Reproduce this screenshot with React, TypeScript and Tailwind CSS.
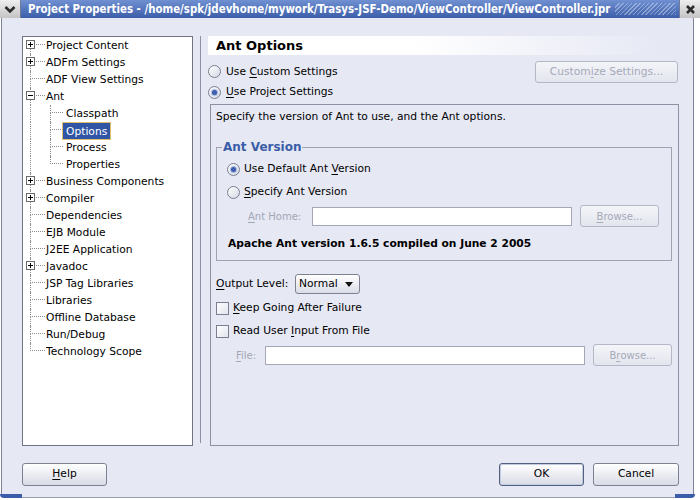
import React from "react";

type Node = {
  label: string;
  exp?: "+" | "-";
  child?: boolean;
  selected?: boolean;
  lastChild?: boolean;
};

const tree: Node[] = [
  { label: "Project Content", exp: "+" },
  { label: "ADFm Settings", exp: "+" },
  { label: "ADF View Settings" },
  { label: "Ant", exp: "-" },
  { label: "Classpath", child: true },
  { label: "Options", child: true, selected: true },
  { label: "Process", child: true },
  { label: "Properties", child: true, lastChild: true },
  { label: "Business Components", exp: "+" },
  { label: "Compiler", exp: "+" },
  { label: "Dependencies" },
  { label: "EJB Module" },
  { label: "J2EE Application" },
  { label: "Javadoc", exp: "+" },
  { label: "JSP Tag Libraries" },
  { label: "Libraries" },
  { label: "Offline Database" },
  { label: "Run/Debug" },
  { label: "Technology Scope" },
];

// mnemonic: underline one letter, as Swing does
function Mn({ text, at }: { text: string; at: number }) {
  return (
    <>
      {text.slice(0, at)}
      <span className="underline underline-offset-[2px]">{text[at]}</span>
      {text.slice(at + 1)}
    </>
  );
}

function Radio({ checked }: { checked?: boolean }) {
  return (
    <span className="flex h-[13px] w-[13px] shrink-0 items-center justify-center rounded-full border border-[#7a7f91] bg-[linear-gradient(135deg,#ffffff,#d5d8e3)]">
      {checked ? (
        <span className="h-[5px] w-[5px] rounded-full bg-[#3d5fae] shadow-[0_0_0_1px_#a9bbe0]" />
      ) : null}
    </span>
  );
}

function Check() {
  return (
    <span className="h-[13px] w-[13px] shrink-0 border border-[#7a7f91] bg-[linear-gradient(135deg,#ffffff,#e3e5ee)]" />
  );
}

function Button({
  children,
  disabled,
  primary,
  className = "",
}: {
  children: React.ReactNode;
  disabled?: boolean;
  primary?: boolean;
  className?: string;
}) {
  const tone = disabled
    ? "border-[#b3b7c6] text-[#a6a9b8] bg-[linear-gradient(#f4f5f9,#e3e5ee)]"
    : primary
      ? "border-[#52607f] text-black bg-[linear-gradient(#ffffff,#d8dbe6)] shadow-[inset_0_0_0_1px_#c3cbe0]"
      : "border-[#7d8293] text-black bg-[linear-gradient(#ffffff,#d8dbe6)]";
  return (
    <div
      className={`flex shrink-0 items-center justify-center rounded-[3px] border ${tone} ${className}`}
    >
      {children}
    </div>
  );
}

function Expander({ sign }: { sign: "+" | "-" }) {
  return (
    <svg
      width="9"
      height="9"
      viewBox="0 0 9 9"
      className="absolute left-[-4px] top-[3px]"
    >
      <rect x="0.5" y="0.5" width="8" height="8" fill="#fff" stroke="#6a6a6a" />
      <line x1="2" y1="4.5" x2="7" y2="4.5" stroke="#000" />
      {sign === "+" ? <line x1="4.5" y1="2" x2="4.5" y2="7" stroke="#000" /> : null}
    </svg>
  );
}

function TreeRow({ node, first, last }: { node: Node; first: boolean; last: boolean }) {
  const dot = "border-dotted border-[#8c8c8c]";
  if (node.child) {
    return (
      <div className="flex h-[17px] items-center">
        <div className={`h-full w-[20px] shrink-0 border-l ${dot}`} />
        <div className="flex h-full w-[13px] shrink-0 flex-col">
          <div className={`h-[8px] border-b border-l ${dot}`} />
          <div className={`flex-1 ${node.lastChild ? "" : `border-l ${dot}`}`} />
        </div>
        {node.selected ? (
          <span className="bg-[#2f55a4] px-[3px] pt-[1px] leading-[15px] text-white outline outline-1 outline-[#e0be6e]">
            {node.label}
          </span>
        ) : (
          <span className="mt-[2px] pl-[3px]">{node.label}</span>
        )}
      </div>
    );
  }
  return (
    <div className="flex h-[17px] items-center">
      <div className="relative flex h-full w-[15px] shrink-0 flex-col">
        <div className={`h-[8px] border-b ${first ? "" : "border-l"} ${dot}`} />
        <div className={`flex-1 ${last ? "" : `border-l ${dot}`}`} />
        {node.exp ? <Expander sign={node.exp} /> : null}
      </div>
      <span className="mt-[2px] pl-[1px]">{node.label}</span>
    </div>
  );
}

export default function App() {
  return (
    <div className="h-[500px] w-[700px] overflow-hidden bg-white font-['DejaVu_Sans',sans-serif] text-[10.7px] text-black">
      <div className="flex h-[498px] w-[700px] flex-col">
        {/* title bar */}
        <div className="flex h-[18px] shrink-0 bg-[linear-gradient(#7090d2,#3c5ea9)]">
          <div className="flex w-[21px] items-center justify-center border-r border-[#6f7a99] bg-[linear-gradient(#eeeeee,#c4c4c4)]">
            <svg width="12" height="9" viewBox="0 0 12 9">
              <polyline
                points="1.5,2 6,6.5 10.5,2"
                fill="none"
                stroke="#2b2b2b"
                strokeWidth="2.6"
              />
            </svg>
          </div>
          <div className="whitespace-nowrap pl-[7px] pr-[5px] font-['DejaVu_Sans_Condensed','DejaVu_Sans',sans-serif] text-[11.4px] leading-[18px] font-bold text-white [font-stretch:condensed]">
            Project Properties - /home/spk/jdevhome/mywork/Trasys-JSF-Demo/ViewController/ViewController.jpr
          </div>
          <div className="my-[3px] mr-[3px] flex-1 bg-[repeating-linear-gradient(-45deg,rgba(255,255,255,0.35)_0_1px,transparent_1px_3px)]" />
          <div className="flex w-[21px] items-center justify-center border-l border-[#6f7a99] bg-[linear-gradient(#eeeeee,#c4c4c4)]">
            <svg width="11" height="11" viewBox="0 0 11 11">
              <path d="M2 2 L9 9 M9 2 L2 9" stroke="#2b2b2b" strokeWidth="2.6" />
            </svg>
          </div>
        </div>

        {/* dialog body */}
        <div className="ml-[1px] flex w-[693px] flex-1 flex-col border-x border-[#7d8196] bg-[#e6e8f4] pl-[20px] pr-[14px] pt-[18px]">
          <div className="flex h-[410px]">
            {/* navigation tree */}
            <div className="w-[171px] shrink-0 border border-[#6f7384] bg-white pl-[7px]">
              {tree.map((n, i) => (
                <TreeRow key={n.label} node={n} first={i === 0} last={i === tree.length - 1} />
              ))}
            </div>

            {/* splitter */}
            <div className="flex w-[15px] shrink-0 justify-center pb-[3px]">
              <div className="w-px bg-[#8c90a2]" />
            </div>

            {/* options page */}
            <div className="flex min-w-0 flex-1 flex-col">
              <div className="mr-[18px] flex h-[19px] shrink-0 items-center bg-[linear-gradient(to_right,#ffffff,#ffffff_45%,#e6e8f4)] pl-[8px] text-[13px] font-bold">
                Ant Options
              </div>

              <div className="mt-[6px] flex h-[22px] shrink-0 items-center justify-between">
                <div className="flex items-center gap-[5px]">
                  <Radio />
                  <span>
                    Use <Mn text="Custom Settings" at={0} />
                  </span>
                </div>
                <Button disabled className="mr-[1px] h-[22px] w-[143px]">
                  <Mn text="Customize Settings..." at={6} />
                </Button>
              </div>
              <div className="flex h-[18px] shrink-0 items-center gap-[5px]">
                <Radio checked />
                <span>
                  <Mn text="Use" at={0} /> Project Settings
                </span>
              </div>

              <div className="ml-[2px] mt-[3px] flex flex-1 flex-col border border-[#8b90a3] pl-[5px] pr-[6px]">
                <div className="mt-[4px] leading-[16px]">
                  Specify the version of Ant to use, and the Ant options.
                </div>

                <fieldset className="mt-[15px] border border-[#9ea2b3] pb-[9px] pl-[5px] pr-[10px]">
                  <legend className="px-[1px] text-[12px] font-bold leading-[14px] text-[#3a5ca6]">
                    Ant Version
                  </legend>
                  <div className="mt-[4px] flex h-[23px] items-center gap-[4px] pl-[5px]">
                    <Radio checked />
                    <span>
                      Use Default Ant <Mn text="Version" at={0} />
                    </span>
                  </div>
                  <div className="flex h-[23px] items-center gap-[4px] pl-[5px]">
                    <Radio />
                    <span>
                      <Mn text="Specify" at={0} /> Ant Version
                    </span>
                  </div>
                  <div className="mt-[1px] flex h-[22px] items-center pl-[26px]">
                    <span className="w-[64px] shrink-0 text-[10px] text-[#a3a6b5]">
                      <Mn text="Ant Home:" at={0} />
                    </span>
                    <div className="h-[19px] w-[260px] border border-[#a3a7b7] bg-white" />
                    <Button disabled className="ml-[8px] h-[22px] w-[79px] text-[10px]">
                      <Mn text="Browse..." at={0} />
                    </Button>
                  </div>
                  <div className="mt-[10px] pl-[6px] font-bold leading-[14px]">
                    Apache Ant version 1.6.5 compiled on June 2 2005
                  </div>
                </fieldset>

                <div className="mt-[13px] flex h-[20px] items-center">
                  <span className="w-[79px]">
                    <Mn text="Output Level:" at={0} />
                  </span>
                  <div className="flex h-[20px] w-[65px] items-center justify-between rounded-[3px] border border-[#7d8293] bg-[linear-gradient(#ffffff,#dadde7)] pl-[3px] pr-[6px]">
                    <span>Normal</span>
                    <svg width="8" height="5" viewBox="0 0 8 5">
                      <path d="M0 0 H8 L4 5 Z" fill="#111" />
                    </svg>
                  </div>
                </div>
                <div className="mt-[3px] flex h-[23px] items-center gap-[4px]">
                  <Check />
                  <span>
                    <Mn text="Keep" at={0} /> Going After Failure
                  </span>
                </div>
                <div className="flex h-[23px] items-center gap-[4px]">
                  <Check />
                  <span>
                    Read User <Mn text="Input" at={0} /> From File
                  </span>
                </div>
                <div className="mt-[1px] flex h-[22px] items-center pl-[20px]">
                  <span className="w-[29px] shrink-0 text-[10px] text-[#a3a6b5]">
                    <Mn text="File:" at={0} />
                  </span>
                  <div className="h-[19px] w-[321px] border border-[#a3a7b7] bg-white" />
                  <Button disabled className="ml-[8px] h-[22px] w-[79px] text-[10px]">
                    <Mn text="Browse..." at={1} />
                  </Button>
                </div>
              </div>
            </div>
          </div>

          {/* dialog buttons */}
          <div className="mt-[17px] flex items-center">
            <Button className="h-[23px] w-[85px]">
              <Mn text="Help" at={0} />
            </Button>
            <div className="flex-1" />
            <Button primary className="h-[23px] w-[85px]">
              OK
            </Button>
            <Button className="ml-[9px] h-[23px] w-[86px]">Cancel</Button>
          </div>
        </div>

        {/* bottom frame edge */}
        <div className="flex h-[4px] shrink-0">
          <div className="w-[22px] rounded-bl-[4px] bg-[#3b5ca8]" />
          <div className="flex-1 border-b border-[#9a9eb2] bg-[#e6e8f4]" />
          <div className="mr-[5px] w-[20px] rounded-br-[4px] bg-[#3b5ca8]" />
        </div>
      </div>
    </div>
  );
}
